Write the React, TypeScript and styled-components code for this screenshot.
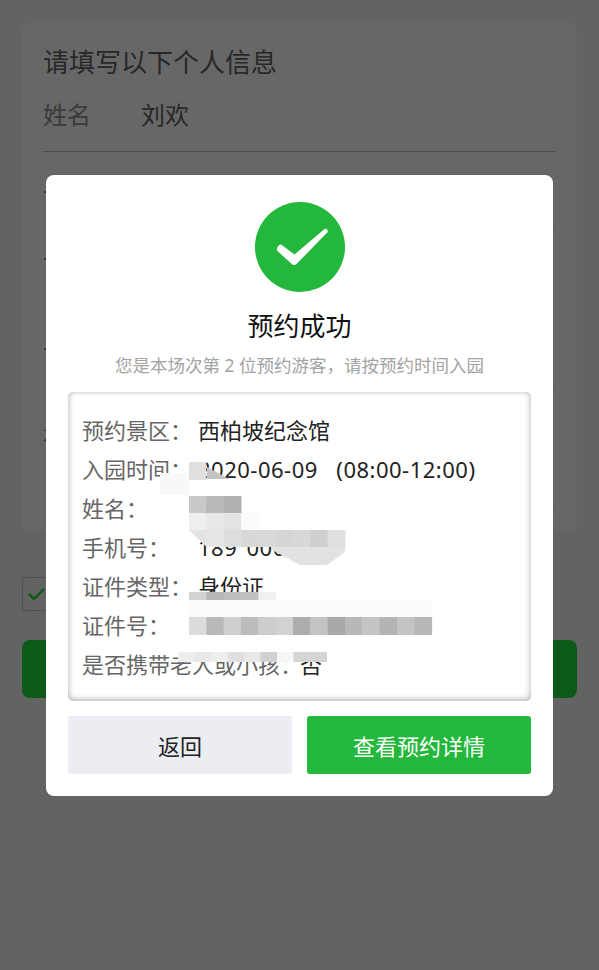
import styled, { createGlobalStyle } from "styled-components";

const GlobalStyle = createGlobalStyle`
  html, body {
    margin: 0;
    padding: 0;
    background: #636364;
    font-family: "Noto Sans", "Noto Sans CJK SC", sans-serif;
  }
  * { box-sizing: border-box; }
`;

const Page = styled.div`
  position: relative;
  width: 599px;
  height: 970px;
  padding: 22px;
  overflow: hidden;
  background: #636364;
`;

const FormCard = styled.div`
  height: 510px;
  padding: 18px 21px 0;
  background: #676768;
  border-radius: 8px;
`;

const FormTitle = styled.h2`
  margin: 0;
  height: 44px;
  font-size: 26px;
  line-height: 44px;
  font-weight: 400;
  color: #272727;
`;

const FormRow = styled.div`
  display: flex;
  align-items: center;
  height: 68px;
  padding-bottom: 8px;
  font-size: 24px;
  color: #272727;
  border-bottom: 1px solid #4d4d4d;
  span:first-child {
    width: 98px;
    color: #3a3a3a;
  }
`;

const CoveredRow = styled.div<{ $height: number; $pad: number; $noLine?: boolean }>`
  height: ${(props) => props.$height}px;
  padding-top: ${(props) => props.$pad}px;
  font-size: 24px;
  line-height: 34px;
  color: #2c2c2c;
  border-bottom: 1px solid ${(props) => (props.$noLine ? "transparent" : "#5c5c5c")};
`;

const Agree = styled.div`
  width: 30px;
  height: 34px;
  margin-top: 45px;
  display: flex;
  align-items: center;
  justify-content: center;
  border: 1px solid #4f4f4f;
  border-radius: 3px;
`;

const SubmitBar = styled.div`
  height: 58px;
  margin-top: 29px;
  background: #0e5a18;
  border-radius: 8px;
`;

const Dialog = styled.div`
  position: absolute;
  left: 46px;
  top: 175px;
  width: 507px;
  height: 621px;
  padding: 27px 22px 0;
  display: flex;
  flex-direction: column;
  align-items: center;
  background: #fff;
  border-radius: 8px;
`;

const ModalTitle = styled.h1`
  margin: 12px 0 0;
  font-size: 26px;
  line-height: 44px;
  font-weight: 400;
  color: #111;
`;

const Hint = styled.p`
  margin: 2px 0 0;
  font-size: 17.5px;
  line-height: 30px;
  color: #a3a3a3;
`;

const Details = styled.div`
  position: relative;
  width: 463px;
  height: 309px;
  margin-top: 12px;
  padding: 19px 14px 0;
  border-radius: 5px;
  box-shadow: inset 0 -1px 6px rgba(0, 0, 0, 0.35);
`;

const DetailRow = styled.div`
  display: flex;
  height: 39px;
  font-size: 22px;
  line-height: 39px;
  white-space: nowrap;
`;

const Label = styled.span<{ $wide?: boolean }>`
  width: ${(props) => (props.$wide ? "218px" : "116px")};
  color: #666;
`;

const Value = styled.span<{ $digits?: boolean }>`
  color: #222;
  letter-spacing: ${(props) => (props.$digits ? "0.5px" : "0")};
  word-spacing: ${(props) => (props.$digits ? "3px" : "0")};
`;

const Mosaic = styled.svg`
  position: absolute;
  left: 0;
  top: 0;
`;

const Actions = styled.div`
  display: flex;
  justify-content: space-between;
  width: 463px;
  margin-top: 15px;
`;

const ActionButton = styled.button<{ $primary?: boolean }>`
  width: 224px;
  height: 58px;
  padding: 0;
  border: none;
  border-radius: 3px;
  font-family: inherit;
  font-size: 22px;
  color: ${(props) => (props.$primary ? "#fff" : "#222")};
  background: ${(props) => (props.$primary ? "#23b83b" : "#ebedf2")};
`;

const rows = [
  { label: "预约景区：", value: "西柏坡纪念馆" },
  { label: "入园时间：", value: "2020-06-09 \u00a0(08:00-12:00)", digits: true },
  { label: "姓名：", value: "刘欢" },
  { label: "手机号：", value: "189 0000", digits: true },
  { label: "证件类型：", value: "身份证" },
  { label: "证件号：", value: "" },
  { label: "是否携带老人或小孩：", value: "否", wide: true },
];

// redaction squares, relative to the details box
const shades = (x: number, y: number, h: number, greys: string[], w = 17.33) =>
  greys.map((g, i) => ({ x: x + i * w, y, w: w + 0.5, h, g }));

const mosaic = [
  ...shades(121, 104, 17, ["#c9c9c9", "#b9b9b9", "#b1b1b1"]),
  ...shades(121, 121, 17, ["#eeeeee", "#e8e8e8", "#e3e3e3", "#fbfbfb"]),
  ...shades(138.33, 138, 17, ["#e6e6e6", "#dddddd", "#d8d8d8", "#d9d9d9", "#d5d5d5", "#d8d8d8", "#cfcfcf", "#e0e0e0"]),
  ...shades(121, 200, 8, ["#d2d2d2", "#b8b8b8", "#bebebe", "#c0c0c0", "#f0f0f0"]),
  ...shades(121, 208, 17, Array(14).fill("#fbfbfb")),
  ...shades(121, 225, 18, ["#dcdcdc", "#b9b9b9", "#cfcfcf", "#bcbcbc", "#cdcdcd", "#d2d2d2", "#adadad", "#c3c3c3", "#a9a9a9", "#b8b8b8", "#c4c4c4", "#b4b4b4", "#c4c4c4", "#b8b8b8"]),
  ...shades(110, 260, 10, ["#eeeeee", "#e8e8e8", "#eeeeee", "#e0e0e0", "#e8e8e8", "#d0d0d0", "#f6f6f6", "#d4d4d4", "#d4d4d4"], 16.5),
];

function App() {
  return (
    <Page>
      <GlobalStyle />
      <FormCard>
        <FormTitle>请填写以下个人信息</FormTitle>
        <FormRow>
          <span>姓名</span>
          <span>刘欢</span>
        </FormRow>
        <CoveredRow $height={74} $pad={21}>手</CoveredRow>
        <CoveredRow $height={73} $pad={19} $noLine>证</CoveredRow>
        <CoveredRow $height={90} $pad={36}>证</CoveredRow>
        <CoveredRow $height={120} $pad={24}>是</CoveredRow>
      </FormCard>
      <Agree>
        <svg width="20" height="16" viewBox="0 0 20 16">
          <path d="M2 8l5 5L17 3" fill="none" stroke="#0e5a18" strokeWidth="2.5" />
        </svg>
      </Agree>
      <SubmitBar />
      <Dialog>
        <svg width="90" height="90" viewBox="0 0 90 90">
          <circle cx="45" cy="45" r="45" fill="#23b83b" />
          <path
            d="M26 42.5L39.5 52.5 69.5 27c1.8-1.2 4 1.5 3 3.3L41.5 62c-1.4 1.4-3.4 1.4-4.8 0L22.5 49c-1.8-2 1.5-7.5 3.5-6.5z"
            fill="#fff"
          />
        </svg>
        <ModalTitle>预约成功</ModalTitle>
        <Hint>您是本场次第 2 位预约游客，请按预约时间入园</Hint>
        <Details>
          {rows.map((row) => (
            <DetailRow key={row.label}>
              <Label $wide={row.wide}>{row.label}</Label>
              <Value $digits={row.digits}>{row.value}</Value>
            </DetailRow>
          ))}
          <Mosaic width="463" height="309" viewBox="0 0 463 309">
            <path d="M92 81h29v22H92z" fill="#f8f8f8" />
            <path d="M121 70h17.3v18H121z" fill="#e0e0e0" />
            <path d="M139 75l22 12h-22z" fill="#c4c4c4" />
            <path d="M121 138h17.5v17zM138 138h139v22l-18 13h-27l-28-15v-3h-66z" fill="#e2e2e2" />
            {mosaic.map((m) => (
              <rect key={`${m.x}-${m.y}`} x={m.x} y={m.y} width={m.w} height={m.h} fill={m.g} />
            ))}
          </Mosaic>
        </Details>
        <Actions>
          <ActionButton>返回</ActionButton>
          <ActionButton $primary>查看预约详情</ActionButton>
        </Actions>
      </Dialog>
    </Page>
  );
}

export default App;
